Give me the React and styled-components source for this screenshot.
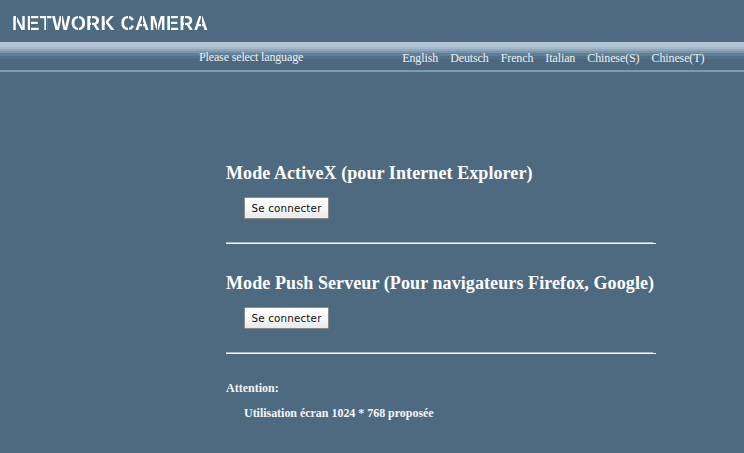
import styled, { createGlobalStyle } from "styled-components";

const BG = "#4d6a80"

const GlobalStyle = createGlobalStyle`
  html, body {
    margin: 0;
    padding: 0;
    background: ${BG};
  }
  body {
    font-family: "Liberation Serif", "Times New Roman", serif;
    color: #fff;
    overflow: hidden;
  }
`

const Page = styled.div`
  width: 744px;
  height: 453px;
  overflow: hidden;
`

const Header = styled.div`
  height: 42px;
  padding: 13px 0 0 12px;
  box-sizing: border-box;
`

const Logo = styled.div`
  display: flex;
  font-family: "Liberation Sans", Arial, sans-serif;
  font-weight: bold;
  font-size: 19.5px;
  line-height: 20px;
  white-space: pre;
`

// stencil look: each letter is cut by a thin gap at $gap px
const LogoLetter = styled.span`
  background: linear-gradient(
    90deg,
    #fff 0 ${p => p.$gap}px,
    ${BG} ${p => p.$gap}px ${p => p.$gap + 1.5}px,
    #fff ${p => p.$gap + 1.5}px
  );
  -webkit-background-clip: text;
  background-clip: text;
  color: transparent;
  margin-right: 0.3px;
`

const LangBar = styled.div`
  height: 30px;
  box-sizing: border-box;
  display: flex;
  font-size: 12px;
  color: #eef2f5;
  background: linear-gradient(
    #b1c4d3 0 5px,
    #a3b8c8 5px 7px,
    #8fa8bc 7px 9px,
    #7794aa 9px 11px,
    #5f7f97 11px 14px,
    #527087 14px 17px,
    #4d687e 17px 28px,
    #7b9bb3 28px 30px
  );
`

const LangLabel = styled.span`
  margin: 8px 0 0 199px;
  line-height: 14px;
  letter-spacing: -0.14px;
`

const LangList = styled.nav`
  display: flex;
  gap: 12px;
  margin: 9px 0 0 99px;
  line-height: 14px;
  letter-spacing: -0.11px;
`

const Content = styled.div`
  padding: 89px 0 0 226px;
  width: 430px;
`

const Section = styled.section`
  height: 110px;
  box-sizing: border-box;
`

const Title = styled.h2`
  margin: 0;
  font-size: 18px;
  line-height: 24px;
  font-weight: bold;
  letter-spacing: 0.09px;
  white-space: nowrap;
`

const ConnectButton = styled.button`
  display: block;
  width: 85px;
  height: 22px;
  margin: 12px 0 0 18px;
  padding: 0;
  font-family: "DejaVu Sans", Verdana, sans-serif;
  font-size: 10.3px;
  letter-spacing: 0.2px;
  color: #111;
  background: linear-gradient(#fff, #f6f6f6 55%, #e9e9e9);
  border: 1px solid #8a8a8a;
  border-radius: 1px;
`

const Rule = styled.div`
  position: relative;
  height: 2px;
  margin-top: 23px;
  background: #f2f2f2;
  border-top: 1px solid #aab6bf;
  box-sizing: border-box;

  &::after {
    content: "";
    position: absolute;
    top: -1px;
    right: 0;
    width: 3px;
    height: 1px;
    background: ${BG};
  }
`

const Notice = styled.div`
  margin-top: 0;
  font-size: 12px;
  font-weight: bold;
  line-height: 14px;
  color: #f4f6f8;
`

const NoticeBody = styled.div`
  margin: 11px 0 0 18px;
  letter-spacing: -0.03px;
`

const logoLetters = [
  ["N", 4], ["E", 4], ["T", 6], ["W", 9], ["O", 7], ["R", 5], ["K", 5],
  [" ", 1],
  ["C", 7], ["A", 7], ["M", 8], ["E", 4], ["R", 5], ["A", 7],
]

export default function App() {
  const languages = ["English", "Deutsch", "French", "Italian", "Chinese(S)", "Chinese(T)"]
  const modes = [
    "Mode ActiveX (pour Internet Explorer)",
    "Mode Push Serveur (Pour navigateurs Firefox, Google)",
  ]

  return (
    <Page>
      <GlobalStyle />
      <Header>
        <Logo aria-label="NETWORK CAMERA">
          {logoLetters.map(([letter, gap], index) => (
            <LogoLetter key={index} $gap={gap}>{letter}</LogoLetter>
          ))}
        </Logo>
      </Header>
      <LangBar>
        <LangLabel>Please select language</LangLabel>
        <LangList>
          {languages.map((lang) => (
            <span key={lang}>{lang}</span>
          ))}
        </LangList>
      </LangBar>
      <Content>
        {modes.map((mode) => (
          <Section key={mode}>
            <Title>{mode}</Title>
            <ConnectButton>Se connecter</ConnectButton>
            <Rule />
          </Section>
        ))}
        <Notice>
          Attention:
          <NoticeBody>Utilisation écran 1024 * 768 proposée</NoticeBody>
        </Notice>
      </Content>
    </Page>
  )
}
